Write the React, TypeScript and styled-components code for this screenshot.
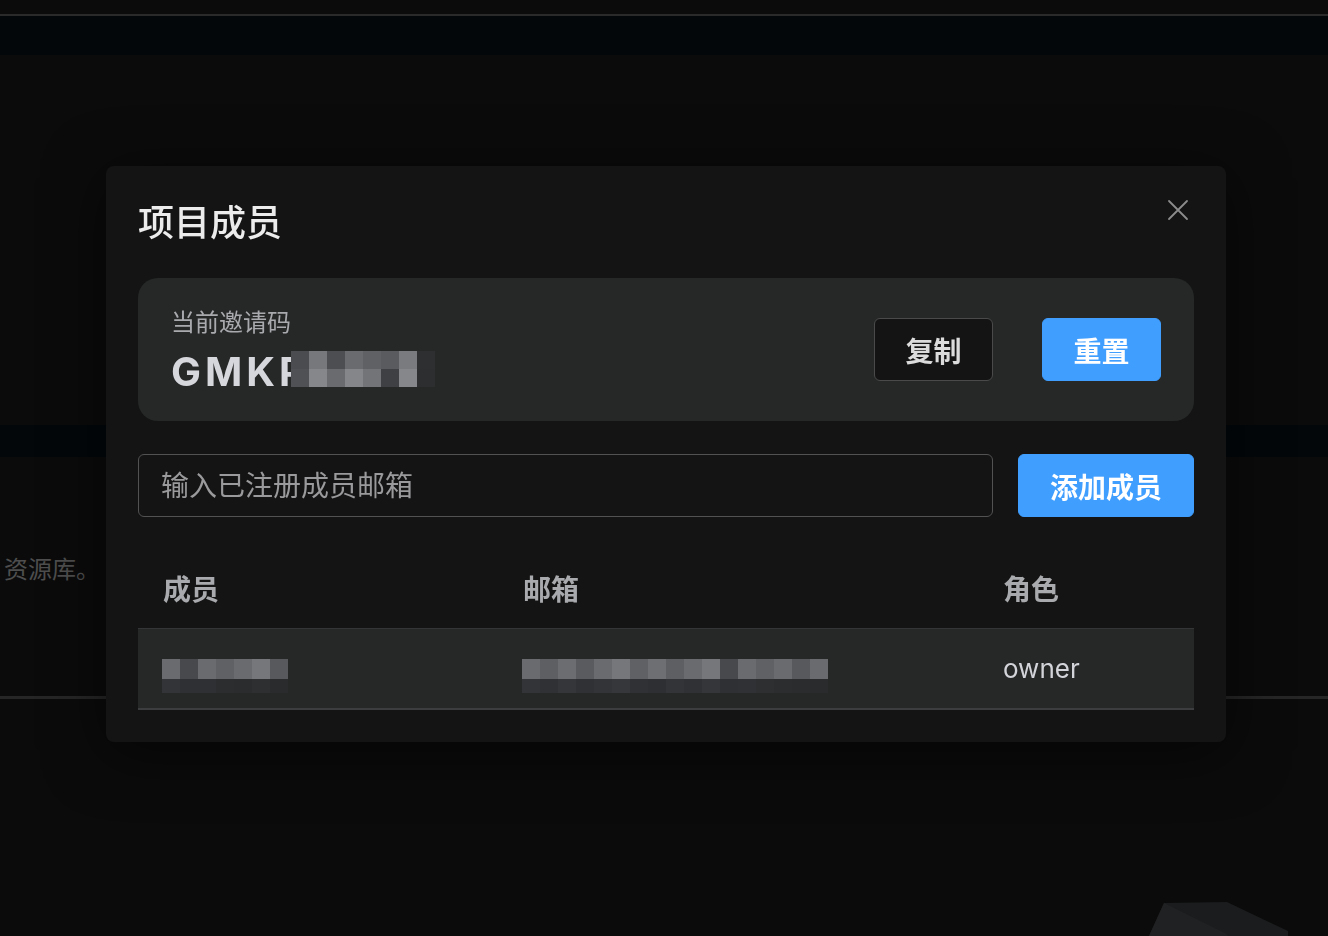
import React, { FC } from "react";
import styled, { createGlobalStyle } from "styled-components";

const GlobalStyle = createGlobalStyle`
  html, body {
    margin: 0;
    padding: 0;
    background: #0b0b0b;
    font-family: Inter, "Noto Sans CJK SC", "Noto Sans", sans-serif;
    overflow: hidden;
  }
  * {
    box-sizing: border-box;
  }
`;

// ---- background page (dimmed behind the dialog) ----

const Page = styled.div`
  width: 1328px;
  height: 936px;
  display: flex;
  flex-direction: column;
  background: #0b0b0b;
  position: relative;
  overflow: hidden;
`;

const TopBar = styled.div`
  height: 16px;
  flex: none;
  background: #0b0b0b;
  border-bottom: 2px solid #2a2a2a;
`;

const Band = styled.div<{ $h: number }>`
  height: ${(p) => p.$h}px;
  flex: none;
  background: #03070a;
`;

const Filler = styled.div<{ $h: number }>`
  height: ${(p) => p.$h}px;
  flex: none;
`;

const DimText = styled.div`
  flex: none;
  height: 100px;
  padding: 15px 0 0 4px;
  font-size: 24px;
  line-height: 34px;
  color: #4e4e4e;
`;

const DimRule = styled.div`
  flex: none;
  height: 3px;
  background: #262626;
`;

const Corner = styled.svg`
  position: absolute;
  right: 0;
  bottom: 0;
`;

// ---- dialog ----

const Overlay = styled.div`
  position: fixed;
  inset: 0;
  padding: 166px 0 0 106px;
`;

const Dialog = styled.div`
  position: relative;
  width: 1120px;
  background: #141414;
  border-radius: 8px;
  padding: 0 32px 32px;
  box-shadow: 0 10px 60px rgba(0, 0, 0, 0.55);
`;

const Header = styled.div`
  height: 112px;
  display: flex;
  align-items: center;
`;

const Title = styled.h2`
  margin: 0;
  font-size: 36px;
  font-weight: 500;
  color: #ececec;
  line-height: 1;
  padding-top: 2px;
`;

const CloseButton = styled.button`
  position: absolute;
  top: 33px;
  right: 37px;
  width: 22px;
  height: 22px;
  padding: 0;
  border: none;
  background: transparent;
  display: flex;
  align-items: center;
  justify-content: center;
  cursor: pointer;
`;

const InviteCard = styled.div`
  height: 143px;
  padding: 0 33px;
  background: #262828;
  border-radius: 20px;
  display: flex;
  align-items: center;
  justify-content: space-between;
`;

const InviteInfo = styled.div`
  display: flex;
  flex-direction: column;
  gap: 8px;
  padding-top: 3px;
`;

const InviteLabel = styled.div`
  font-size: 24px;
  line-height: 34px;
  color: #a9aaad;
`;

const CodeLine = styled.div`
  position: relative;
  font-size: 40px;
  line-height: 48px;
  font-weight: 700;
  letter-spacing: 4px;
  color: #d5d7dc;
`;

const CodeMask = styled.div`
  position: absolute;
  left: 120px;
  top: 3px;
`;

const ButtonGroup = styled.div`
  display: flex;
  gap: 49px;
`;

const Button = styled.button<{ $primary?: boolean; $w: number }>`
  width: ${(p) => p.$w}px;
  height: 63px;
  border-radius: 6px;
  border: 1px solid ${(p) => (p.$primary ? "#409eff" : "#4a4a4a")};
  background: ${(p) => (p.$primary ? "#409eff" : "#141414")};
  color: ${(p) => (p.$primary ? "#ffffff" : "#dcdcdc")};
  font-family: inherit;
  font-size: 28px;
  font-weight: 600;
  padding: 0;
  cursor: pointer;
`;

const InputRow = styled.div`
  margin-top: 33px;
  display: flex;
  gap: 25px;
`;

const EmailInput = styled.input`
  flex: 1;
  height: 63px;
  border: 1px solid #525252;
  border-radius: 6px;
  background: #141414;
  padding: 0 22px;
  font-family: inherit;
  font-size: 28px;
  color: #dcdcdc;
  outline: none;
  &::placeholder {
    color: #9a9a9c;
  }
`;

const Table = styled.div`
  margin-top: 38px;
`;

const TableRow = styled.div<{ $body?: boolean }>`
  display: grid;
  grid-template-columns: 360px 480px 1fr;
  align-items: center;
  padding-left: 24px;
  height: ${(p) => (p.$body ? 82 : 73)}px;
  background: ${(p) => (p.$body ? "#262828" : "transparent")};
  border-top: ${(p) => (p.$body ? "1px solid #343536" : "none")};
  border-bottom: ${(p) => (p.$body ? "2px solid #3c3d3e" : "none")};
`;

const HeadCell = styled.div`
  font-size: 28px;
  font-weight: 600;
  color: #a9aaad;
  padding-left: 1px;
  padding-bottom: 8px;
`;

const BodyCell = styled.div`
  font-size: 26px;
  color: #d2d4d9;
  padding-left: 1px;
`;

const MaskCell = styled.div`
  padding-top: 14px;
`;

const MosaicGrid = styled.div<{ $cols: number; $cell: number; $rows: string }>`
  display: grid;
  grid-template-columns: repeat(${(p) => p.$cols}, ${(p) => p.$cell}px);
  grid-template-rows: ${(p) => p.$rows};
`;

const Tile = styled.div<{ $c: string }>`
  background: ${(p) => p.$c};
`;

const Mosaic: FC<{ rows: string[][]; cell: number; heights: number[] }> = ({
  rows,
  cell,
  heights,
}) => (
  <MosaicGrid
    $cols={rows[0].length}
    $cell={cell}
    $rows={heights.map((h) => `${h}px`).join(" ")}
  >
    {rows.flatMap((r, i) => r.map((c, j) => <Tile key={`${i}-${j}`} $c={c} />))}
  </MosaicGrid>
);

const codeTiles = [
  ["#4b4c4f", "#77787c", "#4d4e51", "#6a6b6f", "#606165", "#5a5b5f", "#7a7b7f", "#2e2f30"],
  ["#505154", "#86878b", "#6a6b6f", "#85868a", "#737478", "#3f4043", "#86878b", "#2d2e2f"],
];

const nameTiles = [
  ["#6a6b6f", "#48494c", "#6a6b6f", "#606165", "#6a6b6f", "#76777b", "#58595c"],
  ["#333437", "#2f3033", "#2f3033", "#2c2d2f", "#2b2c2e", "#2e2f31", "#2a2b2d"],
];

const emailTiles = [
  [
    "#6a6b6f", "#5e5f63", "#6c6d71", "#5a5b5f", "#6a6b6f", "#76777b", "#606165", "#6e6f73",
    "#5e5f63", "#6a6b6f", "#76777b", "#48494c", "#6a6b6f", "#606165", "#6a6b6f", "#58595c",
    "#6a6b6f",
  ],
  [
    "#333437", "#303134", "#35363a", "#303134", "#333437", "#36373a", "#303134", "#2e2f32",
    "#333437", "#303134", "#35363a", "#2f3033", "#303134", "#2e2f31", "#2c2d2f", "#2b2c2e",
    "#2a2b2d",
  ],
];

export default function App() {
  return (
    <>
      <GlobalStyle />
      <Page>
        <TopBar />
        <Band $h={39} />
        <Filler $h={370} />
        <Band $h={32} />
        <Filler $h={81} />
        <DimText>资源库。</DimText>
        <Filler $h={58} />
        <DimRule />
        <Corner width="180" height="36" viewBox="0 0 180 36">
          <polygon points="1,36 16,3 79,2 140,31 140,36" fill="#1b1c1d" />
          <polygon points="1,36 16,3 77,33 80,36" fill="#202123" />
        </Corner>
      </Page>
      <Overlay>
        <Dialog>
          <Header>
            <Title>项目成员</Title>
          </Header>
          <CloseButton aria-label="close">
            <svg width="22" height="22" viewBox="0 0 22 22">
              <path
                d="M2 2 L20 20 M20 2 L2 20"
                stroke="#8c8c8c"
                strokeWidth="1.8"
                strokeLinecap="round"
              />
            </svg>
          </CloseButton>

          <InviteCard>
            <InviteInfo>
              <InviteLabel>当前邀请码</InviteLabel>
              <CodeLine>
                GMKP
                <CodeMask>
                  <Mosaic rows={codeTiles} cell={18} heights={[18, 18]} />
                </CodeMask>
              </CodeLine>
            </InviteInfo>
            <ButtonGroup>
              <Button $w={119}>复制</Button>
              <Button $w={119} $primary>
                重置
              </Button>
            </ButtonGroup>
          </InviteCard>

          <InputRow>
            <EmailInput placeholder="输入已注册成员邮箱" />
            <Button $w={176} $primary>
              添加成员
            </Button>
          </InputRow>

          <Table>
            <TableRow>
              <HeadCell>成员</HeadCell>
              <HeadCell>邮箱</HeadCell>
              <HeadCell>角色</HeadCell>
            </TableRow>
            <TableRow $body>
              <MaskCell>
                <Mosaic rows={nameTiles} cell={18} heights={[20, 14]} />
              </MaskCell>
              <MaskCell>
                <Mosaic rows={emailTiles} cell={18} heights={[20, 14]} />
              </MaskCell>
              <BodyCell>owner</BodyCell>
            </TableRow>
          </Table>
        </Dialog>
      </Overlay>
    </>
  );
}
